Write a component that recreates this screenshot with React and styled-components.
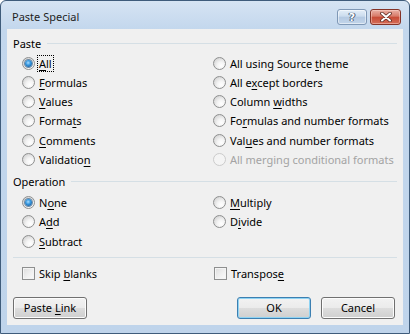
import styled, { createGlobalStyle } from "styled-components";

const GlobalStyle = createGlobalStyle`
  html, body {
    margin: 0;
    padding: 0;
    background: #ffffff;
  }
  body {
    font-family: "Noto Sans", "Segoe UI", sans-serif;
    font-size: 11px;
    color: #000;
  }
`;

const pasteOptions = [
  { label: "All", k: 0, checked: true, focus: true },
  { label: "All using Source theme", k: 17 },
  { label: "Formulas", k: 0 },
  { label: "All except borders", k: 5 },
  { label: "Values", k: 0 },
  { label: "Column widths", k: 7 },
  { label: "Formats", k: 5 },
  { label: "Formulas and number formats", k: 2 },
  { label: "Comments", k: 0 },
  { label: "Values and number formats", k: 3 },
  { label: "Validation", k: 9 },
  { label: "All merging conditional formats", k: -1, disabled: true },
];

const operationOptions = [
  { label: "None", k: 1, checked: true },
  { label: "Multiply", k: 0 },
  { label: "Add", k: 1 },
  { label: "Divide", k: 1 },
  { label: "Subtract", k: 0 },
];

function Label({ text, k }) {
  if (k < 0) return text;
  return (
    <>
      {text.slice(0, k)}
      <Key>{text[k]}</Key>
      {text.slice(k + 1)}
    </>
  );
}

function RadioOption({ option }) {
  const text = <Label text={option.label} k={option.k} />;
  return (
    <Option $disabled={option.disabled}>
      <Radio $checked={option.checked} $disabled={option.disabled} />
      {option.focus ? <Focus>{text}</Focus> : <span>{text}</span>}
    </Option>
  );
}

export default function App() {
  return (
    <>
      <GlobalStyle />
      <Window>
        <TitleBar>
          <Title>Paste Special</Title>
          <CaptionButtons>
            <HelpButton>?</HelpButton>
            <CloseButton>
              <svg width="12" height="10" viewBox="0 0 12 10">
                <path d="M2 1.5 L10 8.5 M10 1.5 L2 8.5" stroke="#5a2a22" strokeWidth="3.6" strokeLinecap="round" />
                <path d="M2 1.5 L10 8.5 M10 1.5 L2 8.5" stroke="#ffffff" strokeWidth="2" strokeLinecap="round" />
              </svg>
            </CloseButton>
          </CaptionButtons>
        </TitleBar>

        <Client>
          <Legend>
            <span>Paste</span>
            <Rule />
          </Legend>
          <OptionGrid $top="2.5px">
            {pasteOptions.map((o) => (
              <RadioOption key={o.label} option={o} />
            ))}
          </OptionGrid>

          <Legend $top="4.7px">
            <span>Operation</span>
            <Rule />
          </Legend>
          <OptionGrid $top="3.4px">
            {operationOptions.map((o) => (
              <RadioOption key={o.label} option={o} />
            ))}
          </OptionGrid>

          <Separator />

          <OptionGrid $top="5.4px">
            <Option>
              <Checkbox />
              <span>
                Skip <Key>b</Key>lanks
              </span>
            </Option>
            <Option>
              <Checkbox $right />
              <span>
                Transpos<Key>e</Key>
              </span>
            </Option>
          </OptionGrid>

          <ButtonRow>
            <PushButton>
              <span>
                Paste <Key>L</Key>ink
              </span>
            </PushButton>
            <Spacer />
            <PushButton $default>OK</PushButton>
            <PushButton>Cancel</PushButton>
          </ButtonRow>
        </Client>
      </Window>
    </>
  );
}

const Window = styled.div`
  width: 410px;
  height: 334px;
  box-sizing: border-box;
  display: flex;
  flex-direction: column;
  border: 1px solid #3f5c7b;
  border-radius: 6px 6px 0 0;
  background: linear-gradient(#d6e4f3 0, #c3d7ed 28px, #bfd4eb 100%);
  padding: 0 6px 8px 6px;
`;

const TitleBar = styled.div`
  height: 28px;
  display: flex;
  align-items: center;
  padding-left: 5px;
`;

const Title = styled.div`
  flex: 1;
  font-size: 11px;
  color: #1e1e1e;
  padding-top: 2px;
`;

const CaptionButtons = styled.div`
  align-self: flex-start;
  margin-top: 8px;
  margin-right: 2px;
  display: flex;
  gap: 3px;
`;

const CaptionButton = styled.div`
  height: 16px;
  box-sizing: border-box;
  border-radius: 3px;
  display: flex;
  align-items: center;
  justify-content: center;
`;

const HelpButton = styled(CaptionButton)`
  width: 30px;
  border: 1px solid #7f98b6;
  background: linear-gradient(#e4eef8 0, #cbdcee 45%, #b4c9e2 50%, #c2d5ea 100%);
  box-shadow: inset 0 0 0 1px rgba(255, 255, 255, 0.5);
  color: #ffffff;
  font-family: "DejaVu Sans", sans-serif;
  font-weight: bold;
  font-size: 11px;
  text-shadow: 0 0 1px #394f6b, 0 0 1px #394f6b, 1px 0 0 #4a6180, -1px 0 0 #4a6180;
`;

const CloseButton = styled(CaptionButton)`
  width: 31px;
  border: 1px solid #843327;
  background: linear-gradient(#eab1a6 0, #d77a68 45%, #c74a35 50%, #d46d58 100%);
  box-shadow: inset 0 0 0 1px rgba(255, 220, 210, 0.45);
`;

const Client = styled.div`
  flex: 1;
  background: #f0f0f0;
  display: flex;
  flex-direction: column;
  padding: 0 6px;
`;

const Legend = styled.div`
  margin-top: ${(p) => p.$top || "6px"};
  height: 16px;
  display: flex;
  align-items: center;
  gap: 6px;
`;

const Rule = styled.div`
  flex: 1;
  height: 1px;
  background: #d5dfe5;
`;

const Separator = styled.div`
  margin-top: 6.4px;
  height: 1px;
  background: #d5dfe5;
`;

const OptionGrid = styled.div`
  margin-top: ${(p) => p.$top};
  display: grid;
  grid-template-columns: 191px 1fr;
  grid-auto-rows: 19.25px;
  padding-left: 9px;
`;

const Option = styled.div`
  display: flex;
  align-items: center;
  gap: 4px;
  white-space: nowrap;
  color: ${(p) => (p.$disabled ? "#a3a3a3" : "#000")};
`;

const Radio = styled.span`
  width: 13px;
  height: 13px;
  box-sizing: border-box;
  border-radius: 50%;
  flex-shrink: 0;
  display: flex;
  align-items: center;
  justify-content: center;
  border: 1px solid ${(p) => (p.$disabled ? "#cbcbcb" : "#8e8f8f")};
  background: ${(p) =>
    p.$disabled
      ? "#f4f4f4"
      : "radial-gradient(circle at 65% 70%, #ffffff 0, #f4f4f4 35%, #d2d2d2 85%)"};

  &::after {
    content: "";
    display: ${(p) => (p.$checked ? "block" : "none")};
    width: 7px;
    height: 7px;
    border-radius: 50%;
    background: radial-gradient(circle at 45% 40%, #a8dcff 0, #3a9ae0 40%, #0c4f92 90%);
    box-shadow: 0 0 0 1px #6f8aa3;
  }
`;

const Checkbox = styled.span`
  width: 13px;
  height: 13px;
  box-sizing: border-box;
  flex-shrink: 0;
  margin-left: ${(p) => (p.$right ? "1px" : "0")};
  border: 1px solid #8e8f8f;
  background: linear-gradient(135deg, #dcdcdc 0, #eeeeee 50%, #fbfbfb 100%);
  box-shadow: inset 0 0 0 1px #f4f4f4;
`;

const Key = styled.span`
  text-decoration: underline;
  text-underline-offset: 2px;
`;

const Focus = styled.span`
  outline: 1px dotted #000;
  outline-offset: 0;
  padding: 0 1px;
  margin-left: -1px;
`;

const ButtonRow = styled.div`
  margin-top: 14px;
  display: flex;
  gap: 10px;
  padding-right: 2px;
`;

const Spacer = styled.div`
  flex: 1;
`;

const PushButton = styled.div`
  width: 74px;
  height: 22px;
  box-sizing: border-box;
  border-radius: 3px;
  display: flex;
  align-items: center;
  justify-content: center;
  border: 1px solid ${(p) => (p.$default ? "#3c7fb1" : "#707070")};
  background: linear-gradient(#f2f2f2 0, #ebebeb 50%, #dddddd 50%, #cfcfcf 100%);
  box-shadow: inset 0 0 0 1px ${(p) => (p.$default ? "#8fd3f3" : "#fcfcfc")};
`;
